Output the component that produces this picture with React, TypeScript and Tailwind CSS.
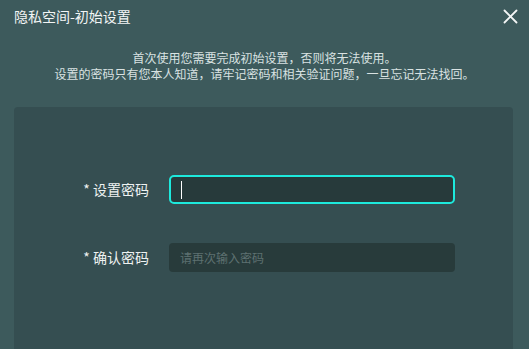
export default function App() {
  return (
    <div
      className="w-[529px] h-[349px] overflow-hidden bg-[#3d5a5c] text-white flex flex-col"
      style={{ fontFamily: '"Noto Sans CJK SC", "Noto Sans", sans-serif' }}
    >
      {/* HEADER */}
      <div className="flex items-center justify-between h-[32px] pl-[14px] pr-[11px]">
        <span className="text-[14px] leading-none text-[#f2f5f5]">隐私空间-初始设置</span>
        <svg width="15" height="15" viewBox="0 0 15 15">
          <path d="M1.5 1.5 L13.5 13.5 M13.5 1.5 L1.5 13.5" stroke="#f4f6f6" strokeWidth="1.8" strokeLinecap="round" />
        </svg>
      </div>

      {/* NOTICE */}
      <div className="mt-[18px] text-center text-[12px] leading-[16px] text-[#d9e2e2]">
        <p>首次使用您需要完成初始设置，否则将无法使用。</p>
        <p>设置的密码只有您本人知道，请牢记密码和相关验证问题，一旦忘记无法找回。</p>
      </div>

      {/* FORM */}
      <div className="mt-[25px] mx-[14px] w-[499px] flex-1 rounded-t-[4px] bg-[#354e51] pt-[68px]">
        <div className="flex items-center">
          <label className="w-[135px] text-right text-[14px] text-[#eef2f2]">* 设置密码</label>
          <div className="ml-[20px] w-[286px] h-[29px] rounded-[5px] border-2 border-[#1de9dc] bg-[#273a3b] flex items-center pl-[10px]">
            <span className="w-px h-[18px] bg-white" />
          </div>
        </div>

        <div className="flex items-center mt-[39px]">
          <label className="w-[135px] text-right text-[14px] text-[#eef2f2]">* 确认密码</label>
          <input
            placeholder="请再次输入密码"
            className="ml-[20px] w-[286px] h-[29px] rounded-[4px] bg-[#283b3b] px-[11px] text-[12px] outline-none placeholder:text-[#5e7171]"
          />
        </div>
      </div>
    </div>
  );
}
